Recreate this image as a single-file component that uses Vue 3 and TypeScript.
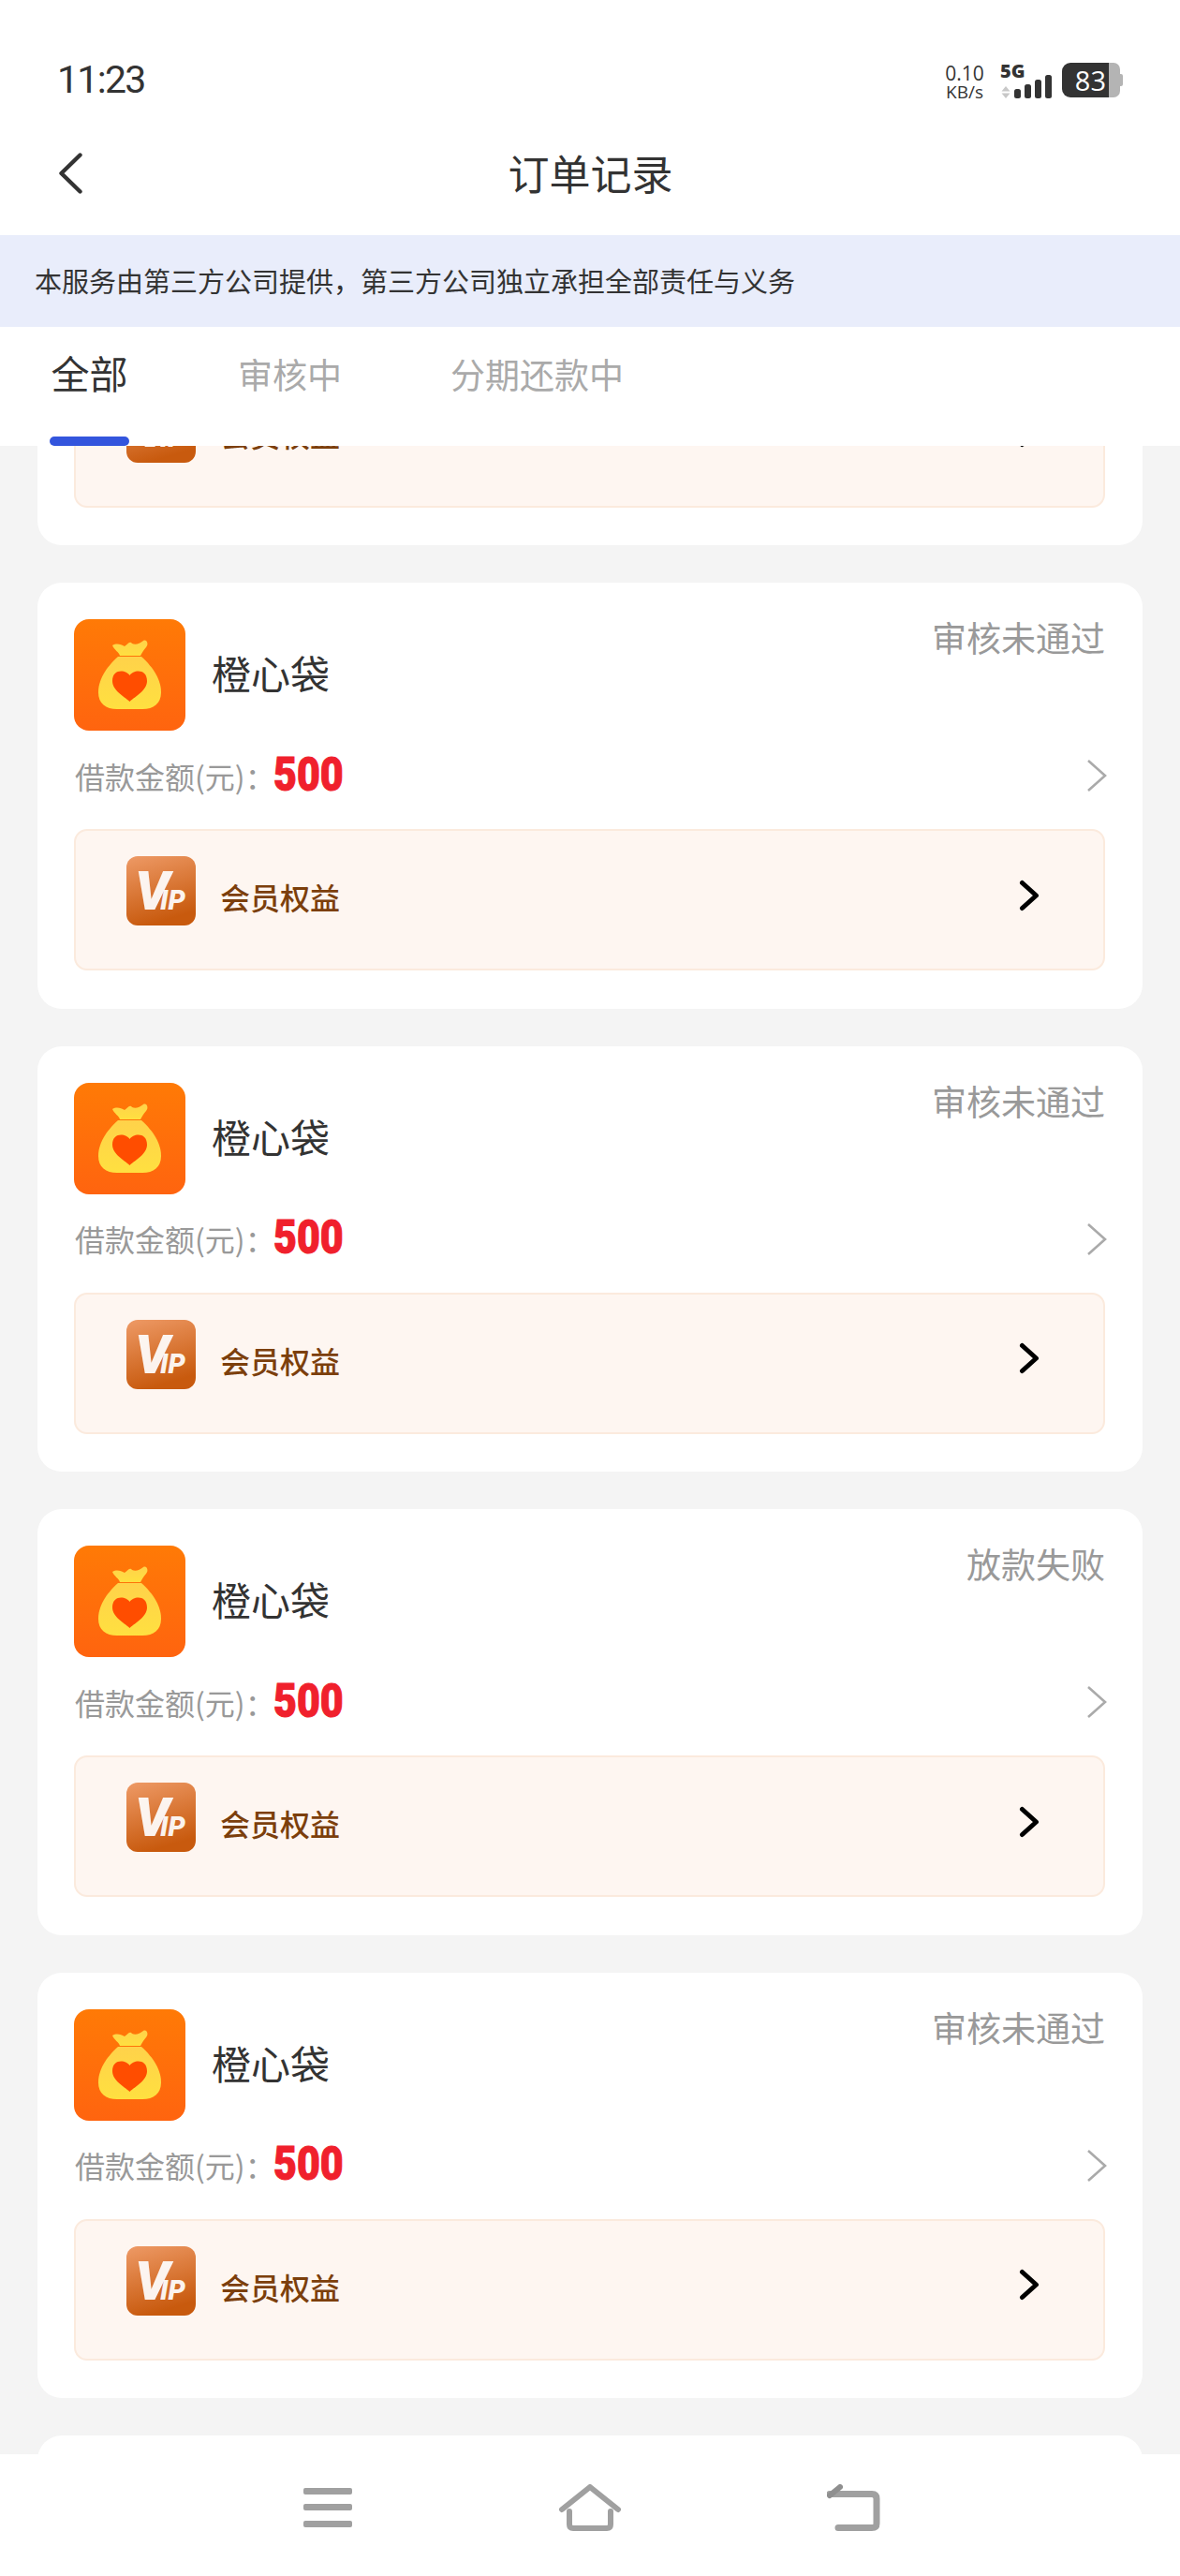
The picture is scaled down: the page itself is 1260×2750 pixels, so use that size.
<template>
  <div class="page">
    <div class="status-bar">
      <span class="time">11:23</span>
      <div class="status-right">
        <div class="speed">
          <span class="speed-num">0.10</span>
          <span class="speed-unit">KB/s</span>
        </div>
        <div class="net">
          <span class="net-label">5G</span>
          <svg class="net-arrows" width="10" height="13" viewBox="0 0 10 13">
            <path d="M5 0 9.5 5.5H.5Z M5 13 .5 7.5H9.5Z" fill="#c8c8c8" />
          </svg>
          <div class="bars">
            <i v-for="h in signalBars" :key="h" class="bar" :style="{ height: h + 'px' }"></i>
          </div>
        </div>
        <div class="battery">
          <span class="battery-level">83</span>
          <span class="battery-rest"></span>
        </div>
      </div>
    </div>

    <div class="nav">
      <svg class="nav-back" width="26" height="44" viewBox="0 0 26 44">
        <path d="M23.5 2.5 3.5 22l20 19.5" fill="none" stroke="#333" stroke-width="4.4" stroke-linecap="round" stroke-linejoin="round" />
      </svg>
      <span class="nav-title">订单记录</span>
    </div>

    <div class="notice">本服务由第三方公司提供，第三方公司独立承担全部责任与义务</div>

    <div class="tabs">
      <div
        v-for="(tab, index) in tabs"
        :key="tab"
        class="tab"
        :class="{ active: index === 0 }"
      >{{ tab }}</div>
    </div>

    <div class="list">
      <div class="list-inner">
        <div v-for="(status, index) in orders" :key="index" class="card">
          <div class="card-head">
            <svg class="logo" width="119" height="119" viewBox="0 0 119 119">
              <defs>
                <linearGradient :id="'logo-bg-' + index" x1="0" y1="0" x2="0" y2="1">
                  <stop offset="0" stop-color="#ff7a06" />
                  <stop offset="1" stop-color="#ff640f" />
                </linearGradient>
                <linearGradient :id="'logo-bag-' + index" x1="0" y1="0" x2="0" y2="1">
                  <stop offset="0" stop-color="#ffd24a" />
                  <stop offset="1" stop-color="#ffe040" />
                </linearGradient>
              </defs>
              <rect width="119" height="119" rx="16" :fill="`url(#logo-bg-${index})`" />
              <path d="M41 28C46 25 50 27 54 29 58 26 60 23 62 26 66 28 70 26 74 23 78 21 80 27 77 30 74 33 72 37 71 39H49C48 35 43 33 41 28Z" :fill="`url(#logo-bag-${index})`" />
              <path d="M47 40C38 48 26 62 26 78 26 90 34 96 46 96H73C85 96 93 90 93 78 93 62 81 48 72 40Z" :fill="`url(#logo-bag-${index})`" />
              <path d="M59.5 60C56 54 41 52 41 66 41 76 53 82 59.5 88 66 82 78 76 78 66 78 52 63 54 59.5 60Z" fill="#ff4d00" />
            </svg>
            <span class="name">橙心袋</span>
            <span class="status">{{ status }}</span>
          </div>

          <div class="amount-row">
            <span class="amount-label">借款金额(元)：</span>
            <span class="amount">500</span>
            <svg class="amount-arrow" width="22" height="36" viewBox="0 0 22 36">
              <path d="M2 2 20 18 2 34" fill="none" stroke="#aaa" stroke-width="2.6" />
            </svg>
          </div>

          <div class="vip">
            <svg class="vip-icon" width="74" height="74" viewBox="0 0 74 74">
              <defs>
                <linearGradient :id="'vip-bg-' + index" x1="0" y1="0" x2="0.3" y2="1">
                  <stop offset="0" stop-color="#ee9a66" />
                  <stop offset="1" stop-color="#c85a0e" />
                </linearGradient>
              </defs>
              <rect width="74" height="74" rx="12" :fill="`url(#vip-bg-${index})`" />
              <text x="9" y="57" class="vip-v">V</text>
              <text x="36" y="57" class="vip-ip">IP</text>
            </svg>
            <span class="vip-text">会员权益</span>
            <svg class="vip-arrow" width="22" height="34" viewBox="0 0 22 34">
              <path d="M3.5 3.5 18.5 17 3.5 30.5" fill="none" stroke="#000" stroke-width="5" stroke-linecap="round" stroke-linejoin="round" />
            </svg>
          </div>
        </div>
      </div>
    </div>

    <div class="bottom-bar">
      <svg class="sys-icon menu-icon" width="52" height="42" viewBox="0 0 52 42">
        <rect y="0" width="52" height="7" rx="2" fill="#a0a0a0" />
        <rect y="17" width="52" height="7" rx="2" fill="#a0a0a0" />
        <rect y="35" width="52" height="7" rx="2" fill="#a0a0a0" />
      </svg>
      <svg class="sys-icon home-icon" width="66" height="50" viewBox="0 0 66 50" fill="none">
        <path d="M3 27 33 3 63 27" stroke="#a0a0a0" stroke-width="6" stroke-linejoin="round" stroke-linecap="round" />
        <path d="M11 29V43Q11 47 15 47H51Q55 47 55 43V29" stroke="#a0a0a0" stroke-width="6" stroke-linecap="round" />
      </svg>
      <svg class="sys-icon back-icon" width="57" height="50" viewBox="0 0 57 50" fill="none">
        <path d="M3 10.5H48Q53 10.5 53 15.5V42Q53 46.5 48 46.5H12" stroke="#a0a0a0" stroke-width="7" stroke-linecap="round" />
        <path d="M14 3 3 12" stroke="#8f8f8f" stroke-width="6" stroke-linecap="round" />
      </svg>
    </div>
  </div>
</template>

<script setup lang="ts">
const signalBars: number[] = [10, 15, 20, 25]
const tabs: string[] = ['全部', '审核中', '分期还款中']
const orders: string[] = ['审核未通过', '审核未通过', '审核未通过', '放款失败', '审核未通过', '审核未通过']
</script>

<style scoped>
.page {
  width: 1260px;
  height: 2750px;
  display: flex;
  flex-direction: column;
  background: #f4f4f4;
  font-family: "Noto Sans CJK SC", "Noto Sans", sans-serif;
  color: #333;
  overflow: hidden;
}

.status-bar {
  height: 126px;
  flex: none;
  background: #fff;
  display: flex;
  justify-content: space-between;
  padding: 67px 64px 0 61px;
  box-sizing: border-box;
}

.time {
  font-family: Roboto, sans-serif;
  font-size: 41px;
  letter-spacing: -1.7px;
  line-height: 37px;
  color: #333;
}

.status-right {
  display: flex;
  height: 38px;
}

.speed {
  width: 50px;
  display: flex;
  flex-direction: column;
  align-items: center;
  font-family: "Open Sans", sans-serif;
  color: #333;
}

.speed-num {
  font-size: 21px;
  line-height: 22px;
}

.speed-unit {
  font-size: 19px;
  line-height: 19px;
}

.net {
  position: relative;
  width: 58px;
  margin-left: 13px;
}

.net-label {
  position: absolute;
  left: 0;
  top: -1px;
  font-family: "Open Sans", sans-serif;
  font-size: 20px;
  font-weight: 800;
  line-height: 20px;
  color: #333;
}

.net-arrows {
  position: absolute;
  left: 1px;
  top: 25px;
}

.bars {
  position: absolute;
  left: 15px;
  top: 13px;
  height: 25px;
  display: flex;
  align-items: flex-end;
  gap: 4px;
}

.bar {
  display: block;
  width: 7px;
  background: #333;
  border-radius: 2.5px;
}

.battery {
  display: flex;
  margin-left: 8px;
  height: 37px;
}

.battery-level {
  width: 50px;
  background: #333;
  border-radius: 9px 0 0 9px;
  color: #fff;
  font-family: "Open Sans", sans-serif;
  font-size: 29px;
  line-height: 37px;
  text-align: right;
  padding-right: 3px;
  box-sizing: border-box;
}

.battery-rest {
  position: relative;
  width: 12px;
  background: #b4b4b4;
  border-radius: 0 7px 7px 0;
}

.battery-rest::after {
  content: "";
  position: absolute;
  right: -3px;
  top: 12px;
  width: 3px;
  height: 13px;
  background: #b4b4b4;
  border-radius: 0 2px 2px 0;
}

.nav {
  height: 125px;
  flex: none;
  background: #fff;
  position: relative;
  display: flex;
  align-items: center;
  justify-content: center;
}

.nav-back {
  position: absolute;
  left: 62px;
  top: 37px;
}

.nav-title {
  font-size: 44px;
  line-height: 60px;
  margin-left: 1px;
  margin-top: -9px;
  color: #333;
}

.notice {
  height: 98px;
  flex: none;
  background: #e9edfb;
  padding-left: 37px;
  font-size: 29px;
  line-height: 96px;
  color: #333;
  white-space: nowrap;
}

.tabs {
  height: 127px;
  flex: none;
  background: #fff;
  display: flex;
  gap: 116px;
  padding-left: 53px;
  box-sizing: border-box;
}

.tab {
  position: relative;
  font-size: 37px;
  line-height: 50px;
  padding-top: 25px;
  color: #aaa;
  white-space: nowrap;
}

.tab.active {
  width: 85px;
  font-size: 41px;
  line-height: 50px;
  padding-top: 23px;
  text-align: center;
  color: #333;
}

.tab.active::after {
  content: "";
  position: absolute;
  left: 0;
  top: 117px;
  width: 85px;
  height: 10px;
  background: #3355dd;
  border-radius: 5px;
}

.list {
  flex: 1;
  min-height: 0;
  overflow: hidden;
}

.list-inner {
  margin-top: -348.5px;
  padding: 0 40px;
  display: flex;
  flex-direction: column;
  gap: 40px;
}

.card {
  background: #fff;
  border-radius: 26px;
  padding: 39px 40px 40.5px 39px;
  height: 454.5px;
  box-sizing: border-box;
  flex: none;
}

.card-head {
  display: flex;
  height: 119px;
}

.logo {
  flex: none;
}

.name {
  margin-left: 28px;
  font-size: 42px;
  line-height: 60px;
  margin-top: 27px;
  color: #333;
}

.status {
  margin-left: auto;
  font-size: 37px;
  line-height: 50px;
  margin-top: -6px;
  color: #999;
  white-space: nowrap;
}

.amount-row {
  height: 105px;
  display: flex;
  align-items: center;
  padding-bottom: 10px;
  box-sizing: border-box;
  position: relative;
}

.amount-label {
  font-size: 32px;
  line-height: 44px;
  color: #999;
  margin-left: 1px;
  white-space: nowrap;
}

.amount {
  font-family: Roboto, sans-serif;
  font-size: 50px;
  font-weight: 900;
  line-height: 50px;
  color: #f0202c;
  display: inline-block;
  transform: scaleX(0.86);
  transform-origin: left center;
  margin-left: -2px;
  margin-top: -2px;
  -webkit-text-stroke: 1px #f0202c;
}

.amount-arrow {
  position: absolute;
  right: -2px;
  top: 30px;
}

.vip {
  height: 151px;
  background: #fef6f1;
  border: 2px solid #fbeadd;
  border-radius: 14px;
  box-sizing: border-box;
  display: flex;
  align-items: center;
  padding: 0 68px 0 54px;
}

.vip-icon {
  flex: none;
  margin-top: -19px;
}

.vip-v {
  font-family: Roboto, sans-serif;
  font-style: italic;
  font-weight: 900;
  font-size: 58px;
  fill: #fff;
  opacity: 0.92;
}

.vip-ip {
  font-family: Roboto, sans-serif;
  font-style: italic;
  font-weight: 900;
  font-size: 29px;
  fill: #fff;
  opacity: 0.92;
}

.vip-text {
  margin-left: 26px;
  margin-top: -7px;
  font-size: 32px;
  font-weight: 500;
  line-height: 44px;
  color: #7c3f0c;
}

.vip-arrow {
  margin-left: auto;
  margin-top: -10px;
}

.bottom-bar {
  height: 130px;
  flex: none;
  background: #fff;
  position: relative;
  display: flex;
}

.sys-icon {
  position: absolute;
}

.menu-icon {
  left: 324px;
  top: 36px;
}

.home-icon {
  left: 597px;
  top: 32px;
}

.back-icon {
  left: 883px;
  top: 32px;
}
</style>
